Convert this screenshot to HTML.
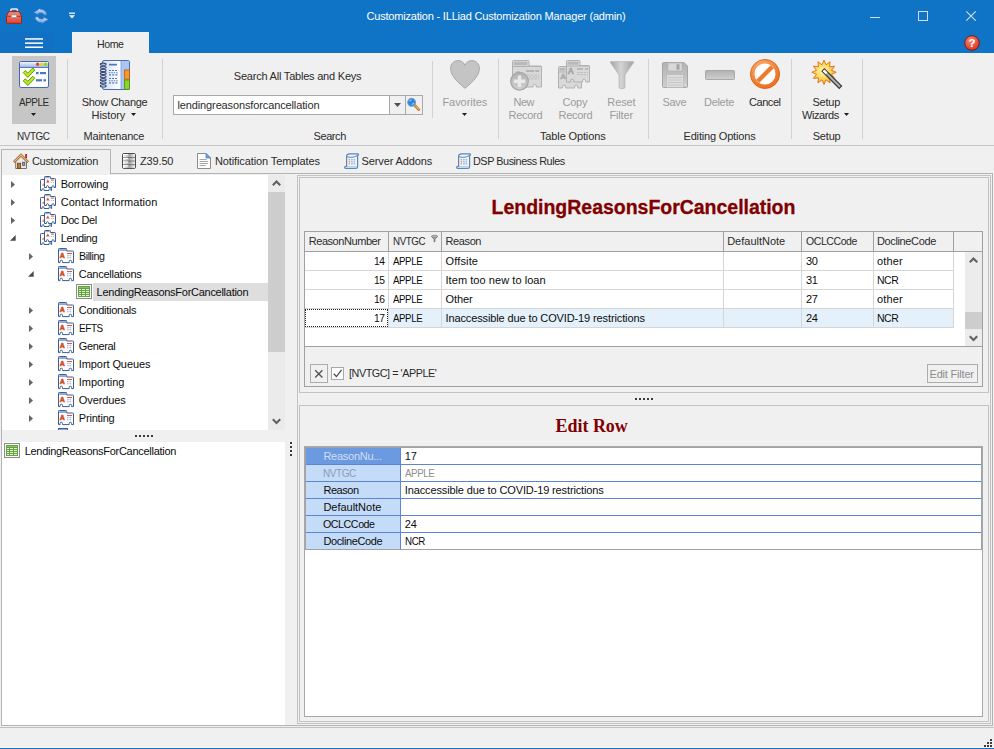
<!DOCTYPE html>
<html lang="en"><head><meta charset="utf-8"><title>Customization - ILLiad Customization Manager (admin)</title><style>
*{box-sizing:border-box;margin:0;padding:0}
html,body{width:994px;height:749px;overflow:hidden;background:#f0f0f0;font-family:"Liberation Sans",sans-serif;font-size:11px;color:#1e1e1e}
.a,.t,svg{position:absolute}
.t{white-space:pre;display:block}
svg{overflow:visible}
.w{color:#fff}.g{color:#9b9b9b}.d{color:#2b2b2b}
.sep{position:absolute;width:1px;background:#d2d2d2}
.dot i{position:absolute;width:2px;height:2px;background:#3c3c3c}
.bx{position:absolute;border:1px solid #c3c3c3}
.k{color:#0c0c0c}.ttl{color:#800000}.ttl1{-webkit-text-stroke:.3px #800000}.g2{color:#8d8d8d}.pl{color:#d2def5}.pg{color:#8e9bb4}</style></head><body><svg width="0" height="0" style="position:absolute"><defs>
<linearGradient id="gGray" x1="0" y1="0" x2="0" y2="1"><stop offset="0" stop-color="#b2b2b2"/><stop offset="1" stop-color="#cfcfcf"/></linearGradient>
<linearGradient id="gGray2" x1="0" y1="0" x2="0" y2="1"><stop offset="0" stop-color="#d2d2d2"/><stop offset="1" stop-color="#bdbdbd"/></linearGradient>
<linearGradient id="gFun" x1="0" y1="0" x2="1" y2="0"><stop offset="0" stop-color="#a4a4a4"/><stop offset=".45" stop-color="#d4d4d4"/><stop offset="1" stop-color="#a0a0a0"/></linearGradient>
<linearGradient id="gWinT" x1="0" y1="0" x2="0" y2="1"><stop offset="0" stop-color="#f2f6fd"/><stop offset="1" stop-color="#9db8e6"/></linearGradient>
<linearGradient id="gPage" x1="0" y1="0" x2="1" y2="0"><stop offset="0" stop-color="#cfdcf0"/><stop offset=".6" stop-color="#ffffff"/><stop offset="1" stop-color="#e8eef9"/></linearGradient>
<radialGradient id="gOr" cx=".4" cy=".3" r=".8"><stop offset="0" stop-color="#fbb27a"/><stop offset="1" stop-color="#e8640f"/></radialGradient>
<radialGradient id="gStar" cx=".45" cy=".45" r=".6"><stop offset="0" stop-color="#fff6b8"/><stop offset=".6" stop-color="#fcd24a"/><stop offset="1" stop-color="#f49a1c"/></radialGradient>
<radialGradient id="gHelp" cx=".4" cy=".3" r=".8"><stop offset="0" stop-color="#f98a72"/><stop offset="1" stop-color="#d42c1c"/></radialGradient>
<linearGradient id="gRed" x1="0" y1="0" x2="0" y2="1"><stop offset="0" stop-color="#f28c7c"/><stop offset="1" stop-color="#dc4636"/></linearGradient>
<linearGradient id="gBl" x1="0" y1="0" x2="0" y2="1"><stop offset="0" stop-color="#cfe4fb"/><stop offset="1" stop-color="#5c9be2"/></linearGradient>
<linearGradient id="gSrv" x1="0" y1="0" x2="0" y2="1"><stop offset="0" stop-color="#ffffff"/><stop offset="1" stop-color="#b4b4b4"/></linearGradient>
<linearGradient id="gSlab" x1="0" y1="0" x2="1" y2="0"><stop offset="0" stop-color="#ffffff"/><stop offset=".55" stop-color="#a2a2a2"/><stop offset="1" stop-color="#f4f4f4"/></linearGradient>
</defs></svg><header class="titlebar"><div class="a" style="left:0px;top:0px;width:994px;height:53px;background:#0f74c6"></div><svg style="left:6px;top:8px" width="16" height="16" viewBox="0 0 16 16"><rect x="4.9" y=".9" width="6.6" height="4" rx="1" fill="none" stroke="#ececec" stroke-width="1.5"/>
<path d="M2.6 3.6h10.8l2.1 4.6v6.2a.9.9 0 0 1-.9.9H1.4a.9.9 0 0 1-.9-.9V8.2z" fill="url(#gRed)" stroke="#a81c14"/>
<path d="M.6 8.3h14.8" stroke="#b02a20" stroke-width=".9"/>
<rect x="5.4" y="6.9" width="5.2" height="2.7" rx=".7" fill="#f6f6f6" stroke="#8e8e8e" stroke-width=".7"/></svg><svg style="left:33px;top:8px" width="16" height="16" viewBox="0 0 16 16"><path d="M14.3 6.6C13.2 3 10.3 1 7.3 1.2L7 .2.4 4.6l5.2 2.6L5.7 5.4C8 4.6 10 5.2 11.4 7.4z" fill="url(#gBl)" stroke="#2f6fc4" stroke-width=".8"/>
<path d="M1.7 9.4C2.8 13 5.7 15 8.7 14.8L9 15.8l6.6-4.4-5.2-2.6-.1 1.8C8 11.4 6 10.8 4.6 8.6z" fill="url(#gBl)" stroke="#2f6fc4" stroke-width=".8"/></svg><svg style="left:69px;top:12px" width="6" height="7" viewBox="0 0 6 7"><rect x="0" y=".6" width="6" height="1.2" fill="#fff"/><path d="M0 3.2h6L3 6.4z" fill="#fff"/></svg><span class="t w" style="left:366.5px;top:9.69px;line-height:13px;letter-spacing:-0.195px;">Customization - ILLiad Customization Manager (admin)</span><svg style="left:870px;top:17px" width="10" height="1" viewBox="0 0 10 1"><rect width="10" height="1" fill="#d3dfee"/></svg><svg style="left:918px;top:11px" width="10" height="10" viewBox="0 0 10 10"><rect x=".5" y=".5" width="9" height="9" fill="none" stroke="#d3dfee"/></svg><svg style="left:966px;top:11px" width="10" height="10" viewBox="0 0 10 10"><path d="M.3 .3l9.4 9.4M9.7 .3L.3 9.7" stroke="#d3dfee" stroke-width="1.1"/></svg><div class="a" style="left:0px;top:32px;width:53px;height:21px;background:#1270c4"></div><svg style="left:25px;top:38px" width="18" height="10" viewBox="0 0 18 10"><rect y=".2" width="18" height="1.5" fill="#fff"/><rect y="4.4" width="18" height="1.5" fill="#fff"/><rect y="8.5" width="18" height="1.5" fill="#fff"/></svg><div class="a" style="left:72px;top:32px;width:77px;height:21px;background:#f0f0f0"></div><span class="t d" style="left:96.6px;top:37.69px;line-height:13px;letter-spacing:-0.450px;transform:scaleX(0.962);transform-origin:0 0;">Home</span><svg style="left:964px;top:35px" width="16" height="16" viewBox="0 0 16 16"><circle cx="8" cy="8" r="7.3" fill="url(#gHelp)" stroke="#8c130c" stroke-width="1"/><text x="8" y="12" text-anchor="middle" font-family="Liberation Sans,sans-serif" font-weight="bold" font-size="11.5" fill="#fff">?</text></svg></header><section class="ribbon"><div class="a" style="left:0px;top:53px;width:994px;height:92px;background:#f0f0f0"></div><div class="a" style="left:0px;top:145px;width:994px;height:1px;background:#c6c6c6"></div><div class="sep" style="left:67px;top:59px;height:80px"></div><div class="sep" style="left:162px;top:59px;height:80px"></div><div class="sep" style="left:432px;top:61px;height:57px"></div><div class="sep" style="left:498px;top:59px;height:80px"></div><div class="sep" style="left:648px;top:59px;height:80px"></div><div class="sep" style="left:791px;top:59px;height:80px"></div><div class="sep" style="left:862px;top:59px;height:80px"></div><div class="a" style="left:12px;top:56px;width:44px;height:68px;background:#c6c6c6"></div><svg style="left:19px;top:61px" width="30" height="28" viewBox="0 0 30 28"><rect x=".5" y=".5" width="29" height="26" rx="1.6" fill="#fff" stroke="#4468b0"/>
<rect x="1" y="1" width="28" height="5" fill="url(#gWinT)"/><path d="M1 6.5h28" stroke="#5a7cc0"/>
<circle cx="18.6" cy="3.3" r="1.7" fill="#e8433a"/><circle cx="22.6" cy="3.3" r="1.7" fill="#f2d21a"/><circle cx="26.5" cy="3.3" r="1.7" fill="#8fd320"/>
<path d="M4.2 11.6l2-2 2.6 2.4 5-5 2 2.1-7 7.3z" fill="#b9ea1e" stroke="#5c8f06" stroke-width=".9"/>
<path d="M4.2 19.8l2-2 2.6 2.4 5-5 2 2.1-7 7.3z" fill="#b9ea1e" stroke="#5c8f06" stroke-width=".9"/>
<rect x="17" y="11" width="2.6" height="2.2" fill="#4a76c6"/><rect x="21" y="11" width="6" height="2.2" fill="#4a76c6"/>
<rect x="17" y="18.2" width="6" height="2.2" fill="#4a76c6"/><rect x="24.4" y="18.2" width="2.6" height="2.2" fill="#4a76c6"/></svg><span class="t d" style="left:18.7px;top:95.69px;line-height:13px;letter-spacing:-0.450px;transform:scaleX(0.897);transform-origin:0 0;">APPLE</span><svg style="left:31px;top:113px" width="5" height="3" viewBox="0 0 5 3"><path d="M0 0h5L2.5 3z" fill="#1e1e1e"/></svg><span class="t d" style="left:16.7px;top:129.69px;line-height:13px;letter-spacing:-0.450px;transform:scaleX(0.899);transform-origin:0 0;">NVTGC</span><svg style="left:100px;top:60px" width="30" height="30" viewBox="0 0 30 30"><rect x="2.5" y=".5" width="27" height="29" rx="1.6" fill="url(#gPage)" stroke="#4a6eb5"/>
<rect x="21" y="1" width="8" height="28" fill="#a9c5f0"/><path d="M21 1v28" stroke="#7c9fdc" stroke-width=".8"/>
<rect x="24.5" y="10" width="5" height="9.2" fill="#f6972a" stroke="#c4570c" stroke-width=".8"/>
<rect x="24.5" y="20" width="5" height="9.3" fill="#8ed328" stroke="#4e9010" stroke-width=".8"/>
<rect x="9" y="3.8" width="8" height="1.7" fill="#4a76c6"/><path d="M9 10.5h9" stroke="#4a76c6" stroke-width="1.1" stroke-dasharray="2 1"/><path d="M9 12.7h9" stroke="#4a76c6" stroke-width="1.1" stroke-dasharray="1.4 1"/><path d="M9 14.9h9" stroke="#4a76c6" stroke-width="1.1" stroke-dasharray="2 1.2"/><path d="M9 18.5h9" stroke="#4a76c6" stroke-width="1.1" stroke-dasharray="2 1"/><path d="M9 20.7h9" stroke="#4a76c6" stroke-width="1.1" stroke-dasharray="1.4 1"/><path d="M9 22.9h9" stroke="#4a76c6" stroke-width="1.1" stroke-dasharray="2 1.2"/><ellipse cx="3.2" cy="4.2" rx="2.9" ry="1.1" fill="#dfe6f2" stroke="#34497a" stroke-width="1.1"/><ellipse cx="3.2" cy="7.3" rx="2.9" ry="1.1" fill="#dfe6f2" stroke="#34497a" stroke-width="1.1"/><ellipse cx="3.2" cy="10.4" rx="2.9" ry="1.1" fill="#dfe6f2" stroke="#34497a" stroke-width="1.1"/><ellipse cx="3.2" cy="13.5" rx="2.9" ry="1.1" fill="#dfe6f2" stroke="#34497a" stroke-width="1.1"/><ellipse cx="3.2" cy="16.6" rx="2.9" ry="1.1" fill="#dfe6f2" stroke="#34497a" stroke-width="1.1"/><ellipse cx="3.2" cy="19.7" rx="2.9" ry="1.1" fill="#dfe6f2" stroke="#34497a" stroke-width="1.1"/><ellipse cx="3.2" cy="22.8" rx="2.9" ry="1.1" fill="#dfe6f2" stroke="#34497a" stroke-width="1.1"/><ellipse cx="3.2" cy="25.9" rx="2.9" ry="1.1" fill="#dfe6f2" stroke="#34497a" stroke-width="1.1"/></svg><span class="t d" style="left:81.7px;top:95.69px;line-height:13px;letter-spacing:-0.319px;">Show Change</span><span class="t d" style="left:91.6px;top:108.69px;line-height:13px;letter-spacing:-0.091px;">History</span><svg style="left:130.5px;top:113px" width="5" height="3" viewBox="0 0 5 3"><path d="M0 0h5L2.5 3z" fill="#1e1e1e"/></svg><span class="t d" style="left:83.5px;top:129.69px;line-height:13px;letter-spacing:-0.200px;">Maintenance</span><span class="t d" style="left:233.8px;top:69.69px;line-height:13px;letter-spacing:-0.212px;">Search All Tables and Keys</span><div class="a" style="left:173px;top:95px;width:250px;height:20px;background:#fff;border:1px solid #a9a9a9"></div><div class="a" style="left:389px;top:96px;width:33px;height:18px;background:#f0f0f0;border-left:1px solid #a9a9a9"></div><div class="a" style="left:405px;top:96px;width:1px;height:18px;background:#a9a9a9"></div><span class="t d" style="left:177.5px;top:98.69px;line-height:13px;letter-spacing:-0.126px;">lendingreasonsforcancellation</span><svg style="left:394px;top:103px" width="7" height="4" viewBox="0 0 7 4"><path d="M0 0h7L3.5 4z" fill="#505050"/></svg><svg style="left:407px;top:97px" width="14" height="15" viewBox="0 0 14 15"><path d="M8.2 8.8l3.6 3.8" stroke="#c07a24" stroke-width="2.8" stroke-linecap="round"/><path d="M8.6 8.8l3.2 3.4" stroke="#f0b862" stroke-width="1.1" stroke-linecap="round"/>
<circle cx="4.6" cy="5.3" r="3.9" fill="#2a84dc" stroke="#7f9cc8" stroke-width="1.1"/><path d="M2.6 4.4a2.4 2.4 0 0 1 2-1.6M4.6 7.4a2.4 2.4 0 0 0 2.2-1.6" stroke="#7fd4f4" stroke-width="1.2" fill="none"/></svg><span class="t d" style="left:313.5px;top:129.69px;line-height:13px;letter-spacing:-0.410px;">Search</span><svg style="left:450px;top:60px" width="30" height="29" viewBox="0 0 30 29"><path d="M15 28.3C5.5 20.6.6 14.6.6 8.4.6 3.8 4 .6 8.1.6c3 0 5.5 1.6 6.9 4.6C16.4 2.2 18.9 .6 21.9 .6 26 .6 29.4 3.8 29.4 8.4c0 6.2-4.9 12.2-14.4 19.9z" fill="#c4c4c4" stroke="#a8a8a8" stroke-width="1"/></svg><span class="t g" style="left:442.4px;top:95.69px;line-height:13px;letter-spacing:-0.039px;">Favorites</span><svg style="left:462px;top:113px" width="5" height="3" viewBox="0 0 5 3"><path d="M0 0h5L2.5 3z" fill="#1e1e1e"/></svg><svg style="left:510px;top:60px" width="32" height="31" viewBox="0 0 32 31"><g transform="translate(2,0)"><path d="M.5 27.0V1.5a1 1 0 0 1 1-1H16a1 1 0 0 1 1 1V6H28.5a1 1 0 0 1 1 1V27.0H24.3V25.9a1.6 1.6 0 0 0 -3.2 0V27.0H9.2V25.9a1.6 1.6 0 0 0 -3.2 0V27.0z" fill="#d9d9d9" stroke="#b1b1b1"/><rect x="1.6" y="1.8" width="13.8" height="3.4" fill="#b9b9b9"/><path d="M.5 6.5H29.5" stroke="#b1b1b1"/></g><rect x="16" y="10" width="8.2" height="2" fill="#b4b4b4"/><rect x="25.2" y="10" width="4" height="2" fill="#b4b4b4"/><path d="M17 15h12.5M19 17h10.5M17 19h12.5" stroke="#bcbcbc" stroke-width="1.1" stroke-dasharray="2.6 1.2"/><path d="M5 13.5l2.2-2.5h1.6l2.2 2.5z" fill="#b9b9b9"/><circle cx="9.5" cy="21.3" r="8.8" fill="url(#gGray)" stroke="#a9a9a9" stroke-width="1.3"/><path d="M9.5 15.6v11.4M3.8 21.3h11.4" stroke="#e9e9e9" stroke-width="3.4"/></svg><span class="t g" style="left:513.4px;top:95.69px;line-height:13px;letter-spacing:-0.450px;">New</span><span class="t g" style="left:508.6px;top:108.69px;line-height:13px;letter-spacing:-0.295px;">Record</span><svg style="left:558px;top:60px" width="32" height="29" viewBox="0 0 32 29"><g transform="translate(0,6)"><path d="M.5 22.0V1.5a1 1 0 0 1 1-1H8a1 1 0 0 1 1 1V5.5H22.5a1 1 0 0 1 1 1V22.0H19.8V20.9a1.6 1.6 0 0 0 -3.2 0V22.0H7.7V20.9a1.6 1.6 0 0 0 -3.2 0V22.0z" fill="#d9d9d9" stroke="#b1b1b1"/><rect x="1.6" y="1.8" width="5.8" height="2.9" fill="#b9b9b9"/><path d="M.5 6.0H23.5" stroke="#b1b1b1"/></g><text x="2.2" y="19.3" font-family="Liberation Sans,sans-serif" font-weight="bold" font-size="8" fill="#a9a9a9" stroke="#a9a9a9" stroke-width=".5">A</text><g transform="translate(8,0)"><path d="M.5 22.0V1.5a1 1 0 0 1 1-1H13a1 1 0 0 1 1 1V5.5H22.5a1 1 0 0 1 1 1V22.0H19.8V20.9a1.6 1.6 0 0 0 -3.2 0V22.0H7.7V20.9a1.6 1.6 0 0 0 -3.2 0V22.0z" fill="#d9d9d9" stroke="#b1b1b1"/><rect x="1.6" y="1.8" width="10.8" height="2.9" fill="#b9b9b9"/><path d="M.5 6.0H23.5" stroke="#b1b1b1"/></g><text x="9.8" y="13.8" font-family="Liberation Sans,sans-serif" font-weight="bold" font-size="8.4" fill="#a6a6a6" stroke="#a6a6a6" stroke-width=".5">A</text><rect x="19" y="8" width="6" height="1.9" fill="#b6b6b6"/><rect x="27" y="8" width="3" height="1.9" fill="#b6b6b6"/><path d="M19 12.5h11M19 14.6h11" stroke="#bdbdbd" stroke-width="1" stroke-dasharray="2.4 1"/></svg><span class="t g" style="left:562.6px;top:95.69px;line-height:13px;letter-spacing:-0.272px;">Copy</span><span class="t g" style="left:558.6px;top:108.69px;line-height:13px;letter-spacing:-0.295px;">Record</span><svg style="left:610px;top:61px" width="24" height="28" viewBox="0 0 24 28"><path d="M.8 .6h22.4a.5.5 0 0 1 .4.8L15 14v12.2a3 1.6 0 0 1-6 0V14L.4 1.4a.5.5 0 0 1 .4-.8z" fill="url(#gFun)" stroke="#b0b0b0" stroke-width=".6"/></svg><span class="t g" style="left:607.3px;top:95.69px;line-height:13px;letter-spacing:-0.110px;">Reset</span><span class="t g" style="left:609.4px;top:108.69px;line-height:13px;letter-spacing:-0.142px;">Filter</span><span class="t d" style="left:540.0px;top:129.69px;line-height:13px;letter-spacing:-0.136px;">Table Options</span><svg style="left:662px;top:62px" width="26" height="26" viewBox="0 0 26 26"><path d="M1.5 .5h20.5l3.5 3.5v20.5a1 1 0 0 1-1 1H1.5a1 1 0 0 1-1-1V1.5a1 1 0 0 1 1-1z" fill="url(#gGray)" stroke="#a6a6a6"/>
<rect x="6" y="1" width="14" height="8" fill="#d9d9d9" stroke="#b0b0b0" stroke-width=".6"/><rect x="14.5" y="2.2" width="3" height="5.5" fill="#a4a4a4"/>
<rect x="4.5" y="12.5" width="17" height="13" fill="#dcdcdc" stroke="#b4b4b4" stroke-width=".6"/>
<path d="M6 15.5h14M6 18h14M6 20.5h14M6 23h14" stroke="#c4c4c4" stroke-width=".9"/><rect x="22.6" y="22" width="1.5" height="1.5" fill="#e2e2e2"/></svg><span class="t g" style="left:662.6px;top:95.69px;line-height:13px;letter-spacing:-0.370px;">Save</span><svg style="left:705px;top:70px" width="30" height="10" viewBox="0 0 30 10"><rect x=".5" y=".5" width="29" height="9" rx=".8" fill="url(#gGray)" stroke="#a9a9a9"/></svg><span class="t g" style="left:704.0px;top:95.69px;line-height:13px;letter-spacing:-0.299px;">Delete</span><svg style="left:750px;top:59px" width="30" height="30" viewBox="0 0 30 30"><circle cx="15" cy="15" r="14.6" fill="url(#gOr)" stroke="#d8600e" stroke-width=".8"/>
<circle cx="15" cy="15" r="10.5" fill="#fff"/><path d="M7.8 22.2L22.2 7.8" stroke="#ee7a2c" stroke-width="4.3"/></svg><span class="t d" style="left:749.0px;top:95.69px;line-height:13px;letter-spacing:-0.450px;">Cancel</span><span class="t d" style="left:683.5px;top:129.69px;line-height:13px;letter-spacing:-0.174px;">Editing Options</span><svg style="left:811px;top:59px" width="32" height="31" viewBox="0 0 32 31"><polygon points="13.0,1.1 15.0,5.8 19.1,2.7 18.5,7.8 23.6,7.2 20.5,11.3 25.2,13.3 20.5,15.3 23.6,19.4 18.5,18.8 19.1,23.9 15.0,20.8 13.0,25.5 11.0,20.8 6.9,23.9 7.5,18.8 2.4,19.4 5.5,15.3 0.8,13.3 5.5,11.3 2.4,7.2 7.5,7.8 6.9,2.7 11.0,5.8" fill="url(#gStar)" stroke="#d8701a" stroke-width=".9"/>
<path d="M11.8 10.6L29.8 28.6" stroke="#3a3a3a" stroke-width="4.4"/><path d="M12.6 11.4L29 27.8" stroke="#b4b4b4" stroke-width="2"/><path d="M12.6 11.4l3 3" stroke="#ffffff" stroke-width="2.4"/></svg><span class="t d" style="left:812.5px;top:95.69px;line-height:13px;letter-spacing:-0.250px;">Setup</span><span class="t d" style="left:801.9px;top:108.69px;line-height:13px;letter-spacing:-0.376px;">Wizards</span><svg style="left:844.3px;top:113px" width="5" height="3" viewBox="0 0 5 3"><path d="M0 0h5L2.5 3z" fill="#1e1e1e"/></svg><span class="t d" style="left:812.7px;top:129.69px;line-height:13px;letter-spacing:-0.190px;">Setup</span></section><nav class="doctabs"><div class="a" style="left:1px;top:173px;width:992px;height:553px;border:1px solid #b4b4b4"></div><div class="a" style="left:1px;top:149px;width:110px;height:25px;background:#f0f0f0;border:1px solid #b4b4b4;border-bottom:0"></div><svg style="left:13px;top:153px" width="16" height="16" viewBox="0 0 16 16"><rect x="12.2" y="1" width="1.8" height="4.2" fill="#c4202a"/>
<path d="M2.7 8.2v7.3h10.8V8.2L8 2.8z" fill="#e8e8e8" stroke="#686868" stroke-width=".9"/>
<path d="M.5 8.2L8 .7l7.5 7.5-1.3 1.4L8 3.4 1.8 9.6z" fill="#edb676" stroke="#8a4a12" stroke-width=".8" stroke-linejoin="round"/>
<rect x="4.4" y="10.2" width="3.3" height="5.1" fill="#ba7628" stroke="#6e3c0c" stroke-width=".7"/>
<rect x="9.6" y="9.3" width="2.2" height="3.2" fill="#6ab0f0" stroke="#585858" stroke-width=".8"/></svg><span class="t d" style="left:31.9px;top:154.69px;line-height:13px;letter-spacing:-0.277px;">Customization</span><svg style="left:122px;top:153px" width="14" height="16" viewBox="0 0 14 16"><rect x=".5" y=".5" width="13" height="15" rx="1.6" fill="#585858" stroke="#4c4c4c"/><rect x="1" y="1.00" width="12" height="3" fill="url(#gSlab)"/><path d="M1 1.60h5" stroke="#fff" stroke-width="1.1"/><rect x="1" y="4.70" width="12" height="3" fill="url(#gSlab)"/><path d="M1 5.30h5" stroke="#fff" stroke-width="1.1"/><rect x="1" y="8.40" width="12" height="3" fill="url(#gSlab)"/><path d="M1 9.00h5" stroke="#fff" stroke-width="1.1"/><rect x="1" y="12.10" width="12" height="3" fill="url(#gSlab)"/><path d="M1 12.70h5" stroke="#fff" stroke-width="1.1"/></svg><span class="t d" style="left:140.0px;top:154.69px;line-height:13px;letter-spacing:-0.158px;">Z39.50</span><svg style="left:197px;top:153px" width="14" height="16" viewBox="0 0 14 16"><path d="M.5 .5h8.5l4.5 4.5v10.5H.5z" fill="#fdfdfd" stroke="#8c8c8c"/><path d="M9 .5v4.5h4.5z" fill="#6aa6ea" stroke="#3f78c8" stroke-width=".7"/>
<path d="M2.6 6.5h7M2.6 8.5h8.5M2.6 10.5h8.5M2.6 12.5h6" stroke="#a8a8a8" stroke-width="1"/></svg><span class="t d" style="left:214.9px;top:154.69px;line-height:13px;letter-spacing:-0.109px;">Notification Templates</span><svg style="left:344px;top:153px" width="15" height="16" viewBox="0 0 15 16"><path d="M2.6 3.3C2.6 1.5 4 .8 6 .8h7.6c1.1 0 1.2 1.4 0 1.6V13.7c0 1.2-.9 1.7-1.9 1.7H1.7c-1.4 0-1.4-1.9 0-2h.9z" fill="#ebf3fd" stroke="#5a86b8" stroke-width="1.2" stroke-linejoin="round"/>
<path d="M3 3.6c2.2 1.3 7.2 1 10.4-1.1" fill="none" stroke="#5a86b8" stroke-width="1"/><path d="M2.6 13.5h10" stroke="#a8c2e4" stroke-width=".8"/>
<rect x="4.7" y="6.1" width="1.3" height="1.3" fill="#f08a3c"/><rect x="4.7" y="8.1" width="1.3" height="1.3" fill="#f08a3c"/><rect x="4.7" y="10.1" width="1.3" height="1.3" fill="#f08a3c"/>
<path d="M7 6.8h4.8M7 8.8h4M7 10.8h4.8" stroke="#8ea4c2" stroke-width="1" stroke-dasharray="1.7 .8"/></svg><span class="t d" style="left:361.6px;top:154.69px;line-height:13px;letter-spacing:-0.135px;">Server Addons</span><svg style="left:456px;top:153px" width="15" height="16" viewBox="0 0 15 16"><path d="M2.6 3.3C2.6 1.5 4 .8 6 .8h7.6c1.1 0 1.2 1.4 0 1.6V13.7c0 1.2-.9 1.7-1.9 1.7H1.7c-1.4 0-1.4-1.9 0-2h.9z" fill="#ebf3fd" stroke="#5a86b8" stroke-width="1.2" stroke-linejoin="round"/>
<path d="M3 3.6c2.2 1.3 7.2 1 10.4-1.1" fill="none" stroke="#5a86b8" stroke-width="1"/><path d="M2.6 13.5h10" stroke="#a8c2e4" stroke-width=".8"/>
<rect x="4.7" y="6.1" width="1.3" height="1.3" fill="#f08a3c"/><rect x="4.7" y="8.1" width="1.3" height="1.3" fill="#f08a3c"/><rect x="4.7" y="10.1" width="1.3" height="1.3" fill="#f08a3c"/>
<path d="M7 6.8h4.8M7 8.8h4M7 10.8h4.8" stroke="#8ea4c2" stroke-width="1" stroke-dasharray="1.7 .8"/></svg><span class="t d" style="left:473.3px;top:154.69px;line-height:13px;letter-spacing:-0.450px;transform:scaleX(0.984);transform-origin:0 0;">DSP Business Rules</span></nav><aside class="navtree"><div class="a" style="left:2px;top:175px;width:266px;height:255px;background:#fff;overflow:hidden"></div><div class="a" style="left:268px;top:175px;width:17px;height:255px;background:#ebebeb"></div><div class="a" style="left:268px;top:192px;width:17px;height:160px;background:#cdcdcd"></div><svg style="left:272px;top:180px" width="9" height="7" viewBox="0 0 9 7"><path d="M.8 5.2L4.5 1.5 8.2 5.2" fill="none" stroke="#606060" stroke-width="2.1"/></svg><svg style="left:272px;top:418px" width="9" height="7" viewBox="0 0 9 7"><path d="M.8 1.2L4.5 4.9 8.2 1.2" fill="none" stroke="#606060" stroke-width="2.1"/></svg><svg style="left:11px;top:181px" width="4" height="7" viewBox="0 0 4 7"><path d="M0 0L4 3.5 0 7z" fill="#646464"/></svg><svg style="left:40px;top:176px" width="16" height="16" viewBox="0 0 16 16"><path d="M4 3.5H1.3a.8.8 0 0 0-.8.8V14.5H2v-.8a1 1 0 0 1 2 0v.8h5v-.8a1 1 0 0 1 2 0v.8h.6V12" fill="none" stroke="#3d5c94"/>
<path d="M2.2 9.8l1-2.9.9 2.9z" fill="#d9663a"/>
<path d="M4.5 11.5V1.3a.8.8 0 0 1 .8-.8h4.4a.8.8 0 0 1 .8.8v1.2h4.2a.8.8 0 0 1 .8.8v8.2H14v-.8a1 1 0 0 0-2 0v.8H8.5v-.8a1 1 0 0 0-2 0v.8z" fill="#fff" stroke="#3d5c94"/>
<rect x="5.2" y="1.1" width="4.6" height="1.1" fill="#8fa8d8"/>
<path d="M6 6.4l1.8-3 1.8 3z" fill="#d9552c"/><rect x="10.9" y="3.6" width="3.3" height="1" fill="#e4502a"/><rect x="11.2" y="6" width="1" height="1" fill="#9fb0cc"/><rect x="13" y="6" width="1" height="1" fill="#9fb0cc"/></svg><span class="t k" style="left:60.7px;top:177.69px;line-height:13px;letter-spacing:-0.237px;">Borrowing</span><svg style="left:11px;top:199px" width="4" height="7" viewBox="0 0 4 7"><path d="M0 0L4 3.5 0 7z" fill="#646464"/></svg><svg style="left:40px;top:194px" width="16" height="16" viewBox="0 0 16 16"><path d="M4 3.5H1.3a.8.8 0 0 0-.8.8V14.5H2v-.8a1 1 0 0 1 2 0v.8h5v-.8a1 1 0 0 1 2 0v.8h.6V12" fill="none" stroke="#3d5c94"/>
<path d="M2.2 9.8l1-2.9.9 2.9z" fill="#d9663a"/>
<path d="M4.5 11.5V1.3a.8.8 0 0 1 .8-.8h4.4a.8.8 0 0 1 .8.8v1.2h4.2a.8.8 0 0 1 .8.8v8.2H14v-.8a1 1 0 0 0-2 0v.8H8.5v-.8a1 1 0 0 0-2 0v.8z" fill="#fff" stroke="#3d5c94"/>
<rect x="5.2" y="1.1" width="4.6" height="1.1" fill="#8fa8d8"/>
<path d="M6 6.4l1.8-3 1.8 3z" fill="#d9552c"/><rect x="10.9" y="3.6" width="3.3" height="1" fill="#e4502a"/><rect x="11.2" y="6" width="1" height="1" fill="#9fb0cc"/><rect x="13" y="6" width="1" height="1" fill="#9fb0cc"/></svg><span class="t k" style="left:60.7px;top:195.69px;line-height:13px;letter-spacing:0.032px;">Contact Information</span><svg style="left:11px;top:217px" width="4" height="7" viewBox="0 0 4 7"><path d="M0 0L4 3.5 0 7z" fill="#646464"/></svg><svg style="left:40px;top:212px" width="16" height="16" viewBox="0 0 16 16"><path d="M4 3.5H1.3a.8.8 0 0 0-.8.8V14.5H2v-.8a1 1 0 0 1 2 0v.8h5v-.8a1 1 0 0 1 2 0v.8h.6V12" fill="none" stroke="#3d5c94"/>
<path d="M2.2 9.8l1-2.9.9 2.9z" fill="#d9663a"/>
<path d="M4.5 11.5V1.3a.8.8 0 0 1 .8-.8h4.4a.8.8 0 0 1 .8.8v1.2h4.2a.8.8 0 0 1 .8.8v8.2H14v-.8a1 1 0 0 0-2 0v.8H8.5v-.8a1 1 0 0 0-2 0v.8z" fill="#fff" stroke="#3d5c94"/>
<rect x="5.2" y="1.1" width="4.6" height="1.1" fill="#8fa8d8"/>
<path d="M6 6.4l1.8-3 1.8 3z" fill="#d9552c"/><rect x="10.9" y="3.6" width="3.3" height="1" fill="#e4502a"/><rect x="11.2" y="6" width="1" height="1" fill="#9fb0cc"/><rect x="13" y="6" width="1" height="1" fill="#9fb0cc"/></svg><span class="t k" style="left:60.7px;top:213.69px;line-height:13px;letter-spacing:-0.450px;">Doc Del</span><svg style="left:10px;top:235px" width="6" height="6" viewBox="0 0 6 6"><path d="M5.7 0v5.7H0z" fill="#4a4a4a"/></svg><svg style="left:40px;top:230px" width="16" height="16" viewBox="0 0 16 16"><path d="M4 3.5H1.3a.8.8 0 0 0-.8.8V14.5H2v-.8a1 1 0 0 1 2 0v.8h5v-.8a1 1 0 0 1 2 0v.8h.6V12" fill="none" stroke="#3d5c94"/>
<path d="M2.2 9.8l1-2.9.9 2.9z" fill="#d9663a"/>
<path d="M4.5 11.5V1.3a.8.8 0 0 1 .8-.8h4.4a.8.8 0 0 1 .8.8v1.2h4.2a.8.8 0 0 1 .8.8v8.2H14v-.8a1 1 0 0 0-2 0v.8H8.5v-.8a1 1 0 0 0-2 0v.8z" fill="#fff" stroke="#3d5c94"/>
<rect x="5.2" y="1.1" width="4.6" height="1.1" fill="#8fa8d8"/>
<path d="M6 6.4l1.8-3 1.8 3z" fill="#d9552c"/><rect x="10.9" y="3.6" width="3.3" height="1" fill="#e4502a"/><rect x="11.2" y="6" width="1" height="1" fill="#9fb0cc"/><rect x="13" y="6" width="1" height="1" fill="#9fb0cc"/></svg><span class="t k" style="left:60.7px;top:231.69px;line-height:13px;letter-spacing:-0.351px;">Lending</span><svg style="left:29px;top:253px" width="4" height="7" viewBox="0 0 4 7"><path d="M0 0L4 3.5 0 7z" fill="#646464"/></svg><svg style="left:58px;top:248px" width="16" height="16" viewBox="0 0 16 16"><path d="M.5 14.6V1.3a.8.8 0 0 1 .8-.8h6.6a.8.8 0 0 1 .8.8V3h6a.8.8 0 0 1 .8.8v10.8h-1.9v-1.2a1.2 1.2 0 0 0-2.4 0v1.2H4.5v-1.2a1.2 1.2 0 0 0-2.4 0v1.2z" fill="#fff" stroke="#3d5c94" stroke-linejoin="round"/>
<rect x="1.2" y="1.2" width="6.8" height="1.7" fill="#809dd6"/>
<text x="1.7" y="10.4" font-family="Liberation Sans,sans-serif" font-weight="bold" font-size="7" fill="#cf4a22" stroke="#cf4a22" stroke-width=".5">A</text>
<rect x="9" y="5" width="5" height="1.1" fill="#e8582c"/><path d="M9 7.7h5M9 9.8h5" stroke="#9fb0cc" stroke-width="1.1" stroke-dasharray="1.6 .8"/></svg><span class="t k" style="left:78.8px;top:249.69px;line-height:13px;letter-spacing:-0.450px;transform:scaleX(0.973);transform-origin:0 0;">Billing</span><svg style="left:28px;top:271px" width="6" height="6" viewBox="0 0 6 6"><path d="M5.7 0v5.7H0z" fill="#4a4a4a"/></svg><svg style="left:58px;top:266px" width="16" height="16" viewBox="0 0 16 16"><path d="M.5 14.6V1.3a.8.8 0 0 1 .8-.8h6.6a.8.8 0 0 1 .8.8V3h6a.8.8 0 0 1 .8.8v10.8h-1.9v-1.2a1.2 1.2 0 0 0-2.4 0v1.2H4.5v-1.2a1.2 1.2 0 0 0-2.4 0v1.2z" fill="#fff" stroke="#3d5c94" stroke-linejoin="round"/>
<rect x="1.2" y="1.2" width="6.8" height="1.7" fill="#809dd6"/>
<text x="1.7" y="10.4" font-family="Liberation Sans,sans-serif" font-weight="bold" font-size="7" fill="#cf4a22" stroke="#cf4a22" stroke-width=".5">A</text>
<rect x="9" y="5" width="5" height="1.1" fill="#e8582c"/><path d="M9 7.7h5M9 9.8h5" stroke="#9fb0cc" stroke-width="1.1" stroke-dasharray="1.6 .8"/></svg><span class="t k" style="left:78.8px;top:267.69px;line-height:13px;letter-spacing:-0.257px;">Cancellations</span><div class="a" style="left:93px;top:283px;width:175px;height:18px;background:#dedede"></div><svg style="left:76px;top:284px" width="16" height="15" viewBox="0 0 16 15"><rect x=".5" y=".5" width="15" height="14" fill="#fff" stroke="#8a8a8a"/><rect x="2" y="2" width="12" height="11" fill="#64a342"/><rect x="3" y="3" width="10" height="1" fill="#8cc06a"/><rect x="3" y="5" width="2" height="1" fill="#e4f2d0"/><rect x="6" y="5" width="3" height="1" fill="#e4f2d0"/><rect x="10" y="5" width="3" height="1" fill="#e4f2d0"/><rect x="3" y="7" width="2" height="1" fill="#e4f2d0"/><rect x="6" y="7" width="3" height="1" fill="#e4f2d0"/><rect x="10" y="7" width="3" height="1" fill="#e4f2d0"/><rect x="3" y="9" width="2" height="1" fill="#e4f2d0"/><rect x="6" y="9" width="3" height="1" fill="#e4f2d0"/><rect x="10" y="9" width="3" height="1" fill="#e4f2d0"/><rect x="3" y="11" width="2" height="1" fill="#e4f2d0"/><rect x="6" y="11" width="3" height="1" fill="#e4f2d0"/><rect x="10" y="11" width="3" height="1" fill="#e4f2d0"/></svg><span class="t k" style="left:96.6px;top:285.69px;line-height:13px;letter-spacing:-0.273px;">LendingReasonsForCancellation</span><svg style="left:29px;top:307px" width="4" height="7" viewBox="0 0 4 7"><path d="M0 0L4 3.5 0 7z" fill="#646464"/></svg><svg style="left:58px;top:302px" width="16" height="16" viewBox="0 0 16 16"><path d="M.5 14.6V1.3a.8.8 0 0 1 .8-.8h6.6a.8.8 0 0 1 .8.8V3h6a.8.8 0 0 1 .8.8v10.8h-1.9v-1.2a1.2 1.2 0 0 0-2.4 0v1.2H4.5v-1.2a1.2 1.2 0 0 0-2.4 0v1.2z" fill="#fff" stroke="#3d5c94" stroke-linejoin="round"/>
<rect x="1.2" y="1.2" width="6.8" height="1.7" fill="#809dd6"/>
<text x="1.7" y="10.4" font-family="Liberation Sans,sans-serif" font-weight="bold" font-size="7" fill="#cf4a22" stroke="#cf4a22" stroke-width=".5">A</text>
<rect x="9" y="5" width="5" height="1.1" fill="#e8582c"/><path d="M9 7.7h5M9 9.8h5" stroke="#9fb0cc" stroke-width="1.1" stroke-dasharray="1.6 .8"/></svg><span class="t k" style="left:78.8px;top:303.69px;line-height:13px;letter-spacing:-0.254px;">Conditionals</span><svg style="left:29px;top:325px" width="4" height="7" viewBox="0 0 4 7"><path d="M0 0L4 3.5 0 7z" fill="#646464"/></svg><svg style="left:58px;top:320px" width="16" height="16" viewBox="0 0 16 16"><path d="M.5 14.6V1.3a.8.8 0 0 1 .8-.8h6.6a.8.8 0 0 1 .8.8V3h6a.8.8 0 0 1 .8.8v10.8h-1.9v-1.2a1.2 1.2 0 0 0-2.4 0v1.2H4.5v-1.2a1.2 1.2 0 0 0-2.4 0v1.2z" fill="#fff" stroke="#3d5c94" stroke-linejoin="round"/>
<rect x="1.2" y="1.2" width="6.8" height="1.7" fill="#809dd6"/>
<text x="1.7" y="10.4" font-family="Liberation Sans,sans-serif" font-weight="bold" font-size="7" fill="#cf4a22" stroke="#cf4a22" stroke-width=".5">A</text>
<rect x="9" y="5" width="5" height="1.1" fill="#e8582c"/><path d="M9 7.7h5M9 9.8h5" stroke="#9fb0cc" stroke-width="1.1" stroke-dasharray="1.6 .8"/></svg><span class="t k" style="left:78.8px;top:321.69px;line-height:13px;letter-spacing:-0.450px;transform:scaleX(0.904);transform-origin:0 0;">EFTS</span><svg style="left:29px;top:343px" width="4" height="7" viewBox="0 0 4 7"><path d="M0 0L4 3.5 0 7z" fill="#646464"/></svg><svg style="left:58px;top:338px" width="16" height="16" viewBox="0 0 16 16"><path d="M.5 14.6V1.3a.8.8 0 0 1 .8-.8h6.6a.8.8 0 0 1 .8.8V3h6a.8.8 0 0 1 .8.8v10.8h-1.9v-1.2a1.2 1.2 0 0 0-2.4 0v1.2H4.5v-1.2a1.2 1.2 0 0 0-2.4 0v1.2z" fill="#fff" stroke="#3d5c94" stroke-linejoin="round"/>
<rect x="1.2" y="1.2" width="6.8" height="1.7" fill="#809dd6"/>
<text x="1.7" y="10.4" font-family="Liberation Sans,sans-serif" font-weight="bold" font-size="7" fill="#cf4a22" stroke="#cf4a22" stroke-width=".5">A</text>
<rect x="9" y="5" width="5" height="1.1" fill="#e8582c"/><path d="M9 7.7h5M9 9.8h5" stroke="#9fb0cc" stroke-width="1.1" stroke-dasharray="1.6 .8"/></svg><span class="t k" style="left:78.8px;top:339.69px;line-height:13px;letter-spacing:-0.363px;">General</span><svg style="left:29px;top:361px" width="4" height="7" viewBox="0 0 4 7"><path d="M0 0L4 3.5 0 7z" fill="#646464"/></svg><svg style="left:58px;top:356px" width="16" height="16" viewBox="0 0 16 16"><path d="M.5 14.6V1.3a.8.8 0 0 1 .8-.8h6.6a.8.8 0 0 1 .8.8V3h6a.8.8 0 0 1 .8.8v10.8h-1.9v-1.2a1.2 1.2 0 0 0-2.4 0v1.2H4.5v-1.2a1.2 1.2 0 0 0-2.4 0v1.2z" fill="#fff" stroke="#3d5c94" stroke-linejoin="round"/>
<rect x="1.2" y="1.2" width="6.8" height="1.7" fill="#809dd6"/>
<text x="1.7" y="10.4" font-family="Liberation Sans,sans-serif" font-weight="bold" font-size="7" fill="#cf4a22" stroke="#cf4a22" stroke-width=".5">A</text>
<rect x="9" y="5" width="5" height="1.1" fill="#e8582c"/><path d="M9 7.7h5M9 9.8h5" stroke="#9fb0cc" stroke-width="1.1" stroke-dasharray="1.6 .8"/></svg><span class="t k" style="left:78.8px;top:357.69px;line-height:13px;letter-spacing:-0.090px;">Import Queues</span><svg style="left:29px;top:379px" width="4" height="7" viewBox="0 0 4 7"><path d="M0 0L4 3.5 0 7z" fill="#646464"/></svg><svg style="left:58px;top:374px" width="16" height="16" viewBox="0 0 16 16"><path d="M.5 14.6V1.3a.8.8 0 0 1 .8-.8h6.6a.8.8 0 0 1 .8.8V3h6a.8.8 0 0 1 .8.8v10.8h-1.9v-1.2a1.2 1.2 0 0 0-2.4 0v1.2H4.5v-1.2a1.2 1.2 0 0 0-2.4 0v1.2z" fill="#fff" stroke="#3d5c94" stroke-linejoin="round"/>
<rect x="1.2" y="1.2" width="6.8" height="1.7" fill="#809dd6"/>
<text x="1.7" y="10.4" font-family="Liberation Sans,sans-serif" font-weight="bold" font-size="7" fill="#cf4a22" stroke="#cf4a22" stroke-width=".5">A</text>
<rect x="9" y="5" width="5" height="1.1" fill="#e8582c"/><path d="M9 7.7h5M9 9.8h5" stroke="#9fb0cc" stroke-width="1.1" stroke-dasharray="1.6 .8"/></svg><span class="t k" style="left:78.8px;top:375.69px;line-height:13px;letter-spacing:-0.029px;">Importing</span><svg style="left:29px;top:397px" width="4" height="7" viewBox="0 0 4 7"><path d="M0 0L4 3.5 0 7z" fill="#646464"/></svg><svg style="left:58px;top:392px" width="16" height="16" viewBox="0 0 16 16"><path d="M.5 14.6V1.3a.8.8 0 0 1 .8-.8h6.6a.8.8 0 0 1 .8.8V3h6a.8.8 0 0 1 .8.8v10.8h-1.9v-1.2a1.2 1.2 0 0 0-2.4 0v1.2H4.5v-1.2a1.2 1.2 0 0 0-2.4 0v1.2z" fill="#fff" stroke="#3d5c94" stroke-linejoin="round"/>
<rect x="1.2" y="1.2" width="6.8" height="1.7" fill="#809dd6"/>
<text x="1.7" y="10.4" font-family="Liberation Sans,sans-serif" font-weight="bold" font-size="7" fill="#cf4a22" stroke="#cf4a22" stroke-width=".5">A</text>
<rect x="9" y="5" width="5" height="1.1" fill="#e8582c"/><path d="M9 7.7h5M9 9.8h5" stroke="#9fb0cc" stroke-width="1.1" stroke-dasharray="1.6 .8"/></svg><span class="t k" style="left:78.8px;top:393.69px;line-height:13px;letter-spacing:-0.113px;">Overdues</span><svg style="left:29px;top:415px" width="4" height="7" viewBox="0 0 4 7"><path d="M0 0L4 3.5 0 7z" fill="#646464"/></svg><svg style="left:58px;top:410px" width="16" height="16" viewBox="0 0 16 16"><path d="M.5 14.6V1.3a.8.8 0 0 1 .8-.8h6.6a.8.8 0 0 1 .8.8V3h6a.8.8 0 0 1 .8.8v10.8h-1.9v-1.2a1.2 1.2 0 0 0-2.4 0v1.2H4.5v-1.2a1.2 1.2 0 0 0-2.4 0v1.2z" fill="#fff" stroke="#3d5c94" stroke-linejoin="round"/>
<rect x="1.2" y="1.2" width="6.8" height="1.7" fill="#809dd6"/>
<text x="1.7" y="10.4" font-family="Liberation Sans,sans-serif" font-weight="bold" font-size="7" fill="#cf4a22" stroke="#cf4a22" stroke-width=".5">A</text>
<rect x="9" y="5" width="5" height="1.1" fill="#e8582c"/><path d="M9 7.7h5M9 9.8h5" stroke="#9fb0cc" stroke-width="1.1" stroke-dasharray="1.6 .8"/></svg><span class="t k" style="left:78.8px;top:411.69px;line-height:13px;letter-spacing:-0.200px;">Printing</span><div class="a" style="left:58px;top:428px;width:10px;height:2px;background:#8fa8d8;border:1px solid #3d5c94;border-bottom:0;border-radius:1px 1px 0 0"></div><div class="a" style="left:2px;top:430px;width:283px;height:12px;background:#f0f0f0"></div><div class="dot"><i style="left:135px;top:435px"></i><i style="left:139px;top:435px"></i><i style="left:143px;top:435px"></i><i style="left:147px;top:435px"></i><i style="left:151px;top:435px"></i></div><div class="a" style="left:2px;top:442px;width:283px;height:283px;background:#fff"></div><svg style="left:4px;top:443px" width="16" height="15" viewBox="0 0 16 15"><rect x=".5" y=".5" width="15" height="14" fill="#fff" stroke="#8a8a8a"/><rect x="2" y="2" width="12" height="11" fill="#64a342"/><rect x="3" y="3" width="10" height="1" fill="#8cc06a"/><rect x="3" y="5" width="2" height="1" fill="#e4f2d0"/><rect x="6" y="5" width="3" height="1" fill="#e4f2d0"/><rect x="10" y="5" width="3" height="1" fill="#e4f2d0"/><rect x="3" y="7" width="2" height="1" fill="#e4f2d0"/><rect x="6" y="7" width="3" height="1" fill="#e4f2d0"/><rect x="10" y="7" width="3" height="1" fill="#e4f2d0"/><rect x="3" y="9" width="2" height="1" fill="#e4f2d0"/><rect x="6" y="9" width="3" height="1" fill="#e4f2d0"/><rect x="10" y="9" width="3" height="1" fill="#e4f2d0"/><rect x="3" y="11" width="2" height="1" fill="#e4f2d0"/><rect x="6" y="11" width="3" height="1" fill="#e4f2d0"/><rect x="10" y="11" width="3" height="1" fill="#e4f2d0"/></svg><span class="t k" style="left:24.7px;top:444.69px;line-height:13px;letter-spacing:-0.283px;">LendingReasonsForCancellation</span><div class="dot"><i style="left:290px;top:442px"></i><i style="left:290px;top:446px"></i><i style="left:290px;top:450px"></i><i style="left:290px;top:454px"></i></div></aside><main class="workspace"><div class="a" style="left:297px;top:175px;width:694px;height:549px;border:1px solid #c3c3c3"></div><div class="a" style="left:299px;top:177px;width:690px;height:216px;border:1px solid #c3c3c3"></div><div class="a" style="left:299px;top:405px;width:690px;height:317px;border:1px solid #c3c3c3"></div><div class="dot"><i style="left:635px;top:398px"></i><i style="left:639px;top:398px"></i><i style="left:643px;top:398px"></i><i style="left:647px;top:398px"></i><i style="left:651px;top:398px"></i></div><span class="t ttl ttl1" style="left:491.6px;top:195.74px;line-height:23px;letter-spacing:-0.023px;font-size:19.5px;font-weight:bold;">LendingReasonsForCancellation</span><div class="a" style="left:304px;top:231px;width:679px;height:156px;border:1px solid #a0a0a0;background:#f0f0f0"></div><div class="a" style="left:305px;top:252px;width:677px;height:94px;background:#fff"></div><div class="a" style="left:305px;top:251px;width:677px;height:1px;background:#a0a0a0"></div><div class="a" style="left:305px;top:346px;width:677px;height:1px;background:#a0a0a0"></div><div class="a" style="left:388px;top:232px;width:1px;height:19px;background:#a0a0a0"></div><div class="a" style="left:388px;top:252px;width:1px;height:76px;background:#d6d6d6"></div><div class="a" style="left:441px;top:232px;width:1px;height:19px;background:#a0a0a0"></div><div class="a" style="left:441px;top:252px;width:1px;height:76px;background:#d6d6d6"></div><div class="a" style="left:723px;top:232px;width:1px;height:19px;background:#a0a0a0"></div><div class="a" style="left:723px;top:252px;width:1px;height:76px;background:#d6d6d6"></div><div class="a" style="left:801px;top:232px;width:1px;height:19px;background:#a0a0a0"></div><div class="a" style="left:801px;top:252px;width:1px;height:76px;background:#d6d6d6"></div><div class="a" style="left:873px;top:232px;width:1px;height:19px;background:#a0a0a0"></div><div class="a" style="left:873px;top:252px;width:1px;height:76px;background:#d6d6d6"></div><div class="a" style="left:953px;top:232px;width:1px;height:19px;background:#a0a0a0"></div><div class="a" style="left:953px;top:252px;width:1px;height:76px;background:#d6d6d6"></div><div class="a" style="left:389px;top:309px;width:564px;height:18px;background:#e4f0fa"></div><div class="a" style="left:441px;top:309px;width:1px;height:18px;background:#d0d8e0"></div><div class="a" style="left:723px;top:309px;width:1px;height:18px;background:#d0d8e0"></div><div class="a" style="left:801px;top:309px;width:1px;height:18px;background:#d0d8e0"></div><div class="a" style="left:873px;top:309px;width:1px;height:18px;background:#d0d8e0"></div><div class="a" style="left:305px;top:270px;width:649px;height:1px;background:#d6d6d6"></div><div class="a" style="left:305px;top:289px;width:649px;height:1px;background:#d6d6d6"></div><div class="a" style="left:305px;top:308px;width:649px;height:1px;background:#d6d6d6"></div><div class="a" style="left:305px;top:327px;width:649px;height:1px;background:#d6d6d6"></div><div class="a" style="left:305px;top:309px;width:83px;height:18px;border:1px dotted #222"></div><span class="t d" style="left:308.7px;top:234.69px;line-height:13px;letter-spacing:-0.437px;">ReasonNumber</span><span class="t d" style="left:392.6px;top:234.69px;line-height:13px;letter-spacing:-0.450px;transform:scaleX(0.888);transform-origin:0 0;">NVTGC</span><span class="t d" style="left:445.5px;top:234.69px;line-height:13px;letter-spacing:-0.387px;">Reason</span><span class="t d" style="left:727.2px;top:234.69px;line-height:13px;letter-spacing:-0.009px;">DefaultNote</span><span class="t d" style="left:805.9px;top:234.69px;line-height:13px;letter-spacing:-0.450px;transform:scaleX(0.956);transform-origin:0 0;">OCLCCode</span><span class="t d" style="left:876.9px;top:234.69px;line-height:13px;letter-spacing:-0.353px;">DoclineCode</span><svg style="left:431px;top:235px" width="7" height="7" viewBox="0 0 7 7"><ellipse cx="3.5" cy="1.3" rx="3.1" ry="1" fill="#cfcfcf" stroke="#6a6a6a" stroke-width=".7"/><path d="M.6 1.8L3 4.2V6.8h1V4.2L6.4 1.8" fill="#9a9a9a" stroke="#555" stroke-width=".5"/></svg><span class="t k" style="left:373.9px;top:254.69px;line-height:13px;letter-spacing:-0.450px;transform:scaleX(0.934);transform-origin:0 0;">14</span><span class="t k" style="left:393.0px;top:254.69px;line-height:13px;letter-spacing:-0.450px;transform:scaleX(0.879);transform-origin:0 0;">APPLE</span><span class="t k" style="left:445.5px;top:254.69px;line-height:13px;letter-spacing:0.144px;">Offsite</span><span class="t k" style="left:805.9px;top:254.69px;line-height:13px;letter-spacing:-0.225px;">30</span><span class="t k" style="left:876.9px;top:254.69px;line-height:13px;letter-spacing:0.184px;">other</span><span class="t k" style="left:373.9px;top:273.69px;line-height:13px;letter-spacing:-0.450px;transform:scaleX(0.934);transform-origin:0 0;">15</span><span class="t k" style="left:393.0px;top:273.69px;line-height:13px;letter-spacing:-0.450px;transform:scaleX(0.879);transform-origin:0 0;">APPLE</span><span class="t k" style="left:445.5px;top:273.69px;line-height:13px;letter-spacing:0.057px;">Item too new to loan</span><span class="t k" style="left:805.9px;top:273.69px;line-height:13px;letter-spacing:-0.225px;">31</span><span class="t k" style="left:876.9px;top:273.69px;line-height:13px;letter-spacing:-0.450px;transform:scaleX(0.947);transform-origin:0 0;">NCR</span><span class="t k" style="left:373.9px;top:292.69px;line-height:13px;letter-spacing:-0.450px;transform:scaleX(0.934);transform-origin:0 0;">16</span><span class="t k" style="left:393.0px;top:292.69px;line-height:13px;letter-spacing:-0.450px;transform:scaleX(0.879);transform-origin:0 0;">APPLE</span><span class="t k" style="left:445.5px;top:292.69px;line-height:13px;letter-spacing:-0.063px;">Other</span><span class="t k" style="left:805.9px;top:292.69px;line-height:13px;letter-spacing:-0.225px;">27</span><span class="t k" style="left:876.9px;top:292.69px;line-height:13px;letter-spacing:0.184px;">other</span><span class="t k" style="left:373.9px;top:311.69px;line-height:13px;letter-spacing:-0.450px;transform:scaleX(0.934);transform-origin:0 0;">17</span><span class="t k" style="left:393.0px;top:311.69px;line-height:13px;letter-spacing:-0.450px;transform:scaleX(0.879);transform-origin:0 0;">APPLE</span><span class="t k" style="left:445.5px;top:311.69px;line-height:13px;letter-spacing:-0.120px;">Inaccessible due to COVID-19 restrictions</span><span class="t k" style="left:805.9px;top:311.69px;line-height:13px;letter-spacing:-0.225px;">24</span><span class="t k" style="left:876.9px;top:311.69px;line-height:13px;letter-spacing:-0.450px;transform:scaleX(0.947);transform-origin:0 0;">NCR</span><div class="a" style="left:965px;top:252px;width:17px;height:94px;background:#ececec"></div><div class="a" style="left:965px;top:312px;width:17px;height:17px;background:#cdcdcd"></div><svg style="left:969px;top:257px" width="9" height="7" viewBox="0 0 9 7"><path d="M.8 5.2L4.5 1.5 8.2 5.2" fill="none" stroke="#606060" stroke-width="2.1"/></svg><svg style="left:969px;top:335px" width="9" height="7" viewBox="0 0 9 7"><path d="M.8 1.2L4.5 4.9 8.2 1.2" fill="none" stroke="#606060" stroke-width="2.1"/></svg><div class="a" style="left:310px;top:364px;width:18px;height:19px;border:1px solid #adadad"></div><svg style="left:314px;top:369px" width="10" height="10" viewBox="0 0 10 10"><path d="M1.2 1.2l7.2 7.2M8.4 1.2L1.2 8.4" stroke="#555" stroke-width="1.4"/></svg><div class="a" style="left:331px;top:367px;width:13px;height:13px;background:#fff;border:1px solid #a8a8a8"></div><svg style="left:333px;top:369px" width="10" height="9" viewBox="0 0 10 9"><path d="M.8 4.8L3.4 7.6 8.6 .8" fill="none" stroke="#4a4a4a" stroke-width="1.3"/></svg><span class="t d" style="left:348.7px;top:366.69px;line-height:13px;letter-spacing:-0.450px;transform:scaleX(0.980);transform-origin:0 0;">[NVTGC] = &#x27;APPLE&#x27;</span><div class="a" style="left:927px;top:364px;width:51px;height:19px;border:1px solid #adadad"></div><span class="t g2" style="left:929.5px;top:367.69px;line-height:13px;letter-spacing:-0.197px;">Edit Filter</span><span class="t ttl" style="left:555.5px;top:414.76px;line-height:22px;letter-spacing:-0.027px;font-size:18px;font-weight:bold;font-family:'Liberation Serif',serif;">Edit Row</span><div class="a" style="left:304px;top:446px;width:679px;height:271px;background:#fff;border:1px solid #a8a8a8"></div><div class="a" style="left:305px;top:447px;width:677px;height:103px;border:1px solid #a2a2a2"></div><div class="a" style="left:306px;top:448px;width:94px;height:16px;background:#6c9ae0"></div><div class="a" style="left:306px;top:465px;width:94px;height:16px;background:#c5dcf9"></div><div class="a" style="left:306px;top:482px;width:94px;height:16px;background:#c5dcf9"></div><div class="a" style="left:306px;top:499px;width:94px;height:16px;background:#c5dcf9"></div><div class="a" style="left:306px;top:516px;width:94px;height:16px;background:#c5dcf9"></div><div class="a" style="left:306px;top:533px;width:94px;height:16px;background:#c5dcf9"></div><div class="a" style="left:306px;top:464px;width:675px;height:1px;background:#5d84d8"></div><div class="a" style="left:306px;top:481px;width:675px;height:1px;background:#5d84d8"></div><div class="a" style="left:306px;top:498px;width:675px;height:1px;background:#5d84d8"></div><div class="a" style="left:306px;top:515px;width:675px;height:1px;background:#5d84d8"></div><div class="a" style="left:306px;top:532px;width:675px;height:1px;background:#5d84d8"></div><div class="a" style="left:400px;top:448px;width:1px;height:101px;background:#5d84d8"></div><span class="t pl" style="left:323.4px;top:449.69px;line-height:13px;letter-spacing:-0.260px;">ReasonNu...</span><span class="t k" style="left:404.8px;top:449.69px;line-height:13px;letter-spacing:-0.225px;">17</span><span class="t pg" style="left:323.4px;top:466.69px;line-height:13px;letter-spacing:-0.450px;transform:scaleX(0.908);transform-origin:0 0;">NVTGC</span><span class="t g2" style="left:404.8px;top:466.69px;line-height:13px;letter-spacing:-0.450px;transform:scaleX(0.885);transform-origin:0 0;">APPLE</span><span class="t k" style="left:323.4px;top:483.69px;line-height:13px;letter-spacing:-0.437px;">Reason</span><span class="t k" style="left:404.8px;top:483.69px;line-height:13px;letter-spacing:-0.129px;">Inaccessible due to COVID-19 restrictions</span><span class="t k" style="left:323.4px;top:500.69px;line-height:13px;letter-spacing:-0.018px;">DefaultNote</span><span class="t k" style="left:323.4px;top:517.69px;line-height:13px;letter-spacing:-0.450px;transform:scaleX(0.969);transform-origin:0 0;">OCLCCode</span><span class="t k" style="left:404.8px;top:517.69px;line-height:13px;letter-spacing:-0.225px;">24</span><span class="t k" style="left:323.4px;top:534.69px;line-height:13px;letter-spacing:-0.380px;">DoclineCode</span><span class="t k" style="left:404.8px;top:534.69px;line-height:13px;letter-spacing:-0.450px;transform:scaleX(0.889);transform-origin:0 0;">NCR</span></main><footer class="statusbar"><div class="a" style="left:0px;top:727px;width:994px;height:1px;background:#c0c0c0"></div><div class="a" style="left:0px;top:747px;width:994px;height:1px;background:#f8f8f8"></div><div class="a" style="left:0px;top:748px;width:994px;height:1px;background:#0f74c6"></div><div class="dot"><i style="left:990px;top:739px"></i><i style="left:987px;top:742px"></i><i style="left:990px;top:742px"></i><i style="left:984px;top:745px"></i><i style="left:987px;top:745px"></i><i style="left:990px;top:745px"></i></div></footer></body></html>
